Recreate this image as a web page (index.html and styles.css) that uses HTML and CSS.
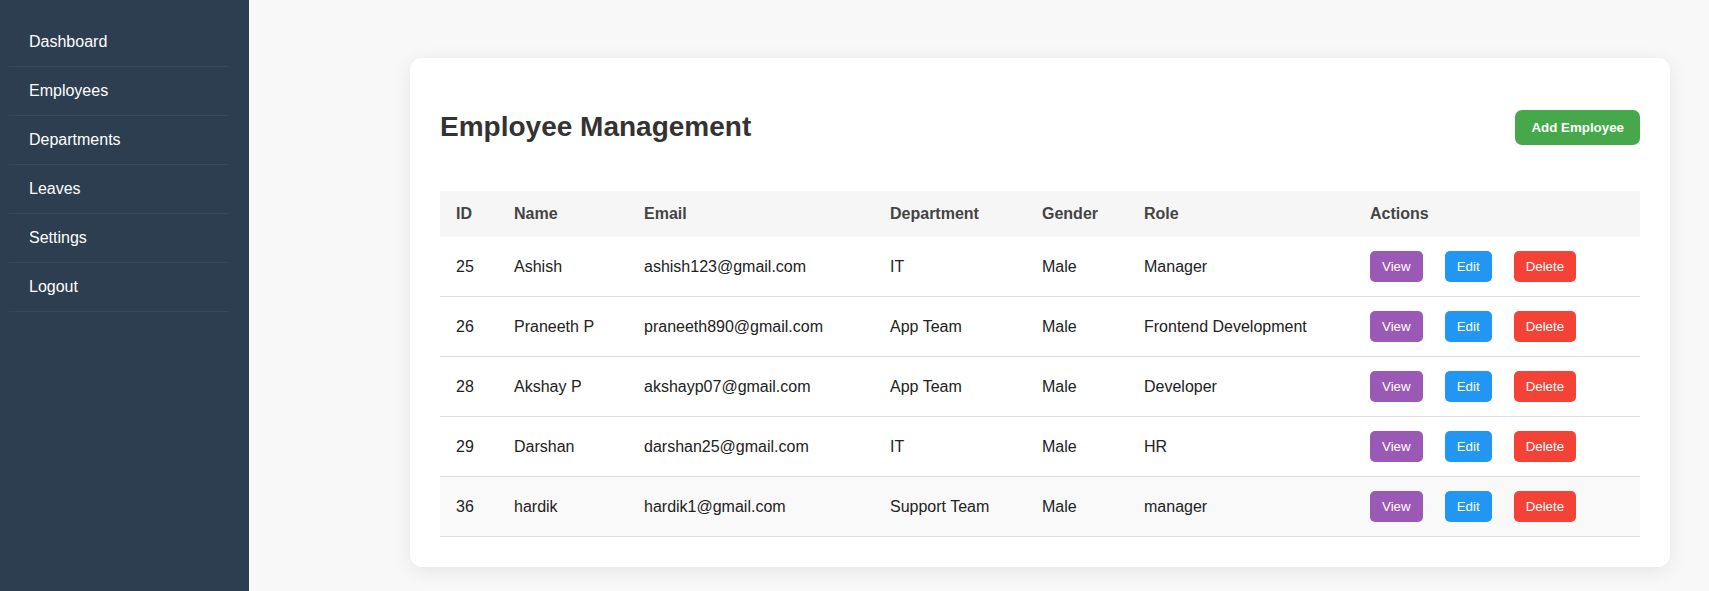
FILE: index.html
```html
<!DOCTYPE html>
<html lang="en">
<head>
<meta charset="utf-8">
<title>Employee Management</title>
<link rel="stylesheet" href="styles.css">
</head>
<body>
<div class="layout">
  <aside class="sidebar">
    <ul class="nav">
      <li class="nav-item">Dashboard</li>
      <li class="nav-item">Employees</li>
      <li class="nav-item">Departments</li>
      <li class="nav-item">Leaves</li>
      <li class="nav-item">Settings</li>
      <li class="nav-item">Logout</li>
    </ul>
  </aside>
  <main class="main">
    <div class="card">
      <div class="card-header">
        <h2 class="title">Employee Management</h2>
        <button class="btn btn-add">Add Employee</button>
      </div>
      <table class="emp-table">
        <thead>
          <tr>
            <th class="col-id">ID</th>
            <th class="col-name">Name</th>
            <th class="col-email">Email</th>
            <th class="col-dept">Department</th>
            <th class="col-gender">Gender</th>
            <th class="col-role">Role</th>
            <th class="col-actions">Actions</th>
          </tr>
        </thead>
        <tbody>
          <tr>
            <td>25</td><td>Ashish</td><td>ashish123@gmail.com</td><td>IT</td><td>Male</td><td>Manager</td>
            <td><div class="actions"><button class="btn btn-view">View</button><button class="btn btn-edit">Edit</button><button class="btn btn-delete">Delete</button></div></td>
          </tr>
          <tr>
            <td>26</td><td>Praneeth P</td><td>praneeth890@gmail.com</td><td>App Team</td><td>Male</td><td>Frontend Development</td>
            <td><div class="actions"><button class="btn btn-view">View</button><button class="btn btn-edit">Edit</button><button class="btn btn-delete">Delete</button></div></td>
          </tr>
          <tr>
            <td>28</td><td>Akshay P</td><td>akshayp07@gmail.com</td><td>App Team</td><td>Male</td><td>Developer</td>
            <td><div class="actions"><button class="btn btn-view">View</button><button class="btn btn-edit">Edit</button><button class="btn btn-delete">Delete</button></div></td>
          </tr>
          <tr>
            <td>29</td><td>Darshan</td><td>darshan25@gmail.com</td><td>IT</td><td>Male</td><td>HR</td>
            <td><div class="actions"><button class="btn btn-view">View</button><button class="btn btn-edit">Edit</button><button class="btn btn-delete">Delete</button></div></td>
          </tr>
          <tr class="row-hover">
            <td>36</td><td>hardik</td><td>hardik1@gmail.com</td><td>Support Team</td><td>Male</td><td>manager</td>
            <td><div class="actions"><button class="btn btn-view">View</button><button class="btn btn-edit">Edit</button><button class="btn btn-delete">Delete</button></div></td>
          </tr>
        </tbody>
      </table>
    </div>
  </main>
</div>
</body>
</html>
```

FILE: styles.css
```css
* { box-sizing: border-box; }

html, body {
  margin: 0;
  padding: 0;
  height: 100%;
}

body {
  font-family: "Liberation Sans", Arial, sans-serif;
  background: #f8f8f8;
  color: #222;
}

.layout {
  display: flex;
  min-height: 100vh;
}

.sidebar {
  width: 249px;
  flex-shrink: 0;
  background: #2c3e50;
  padding: 18px 20px 0 9px;
}

.nav {
  list-style: none;
  margin: 0;
  padding: 0;
}

.nav-item {
  color: #ffffff;
  font-size: 16px;
  line-height: 18px;
  padding: 15px 20px;
  border-bottom: 1px solid #34495e;
}

.main {
  flex: 1;
  padding: 58px 39px 24px 161px;
}

.card {
  background: #ffffff;
  border-radius: 12px;
  box-shadow: 0 4px 20px rgba(0, 0, 0, 0.08);
  padding: 30px;
}

.card-header {
  display: flex;
  align-items: center;
  justify-content: space-between;
  margin-bottom: 25px;
}

.title {
  margin: 23px 0;
  font-size: 28px;
  line-height: 32px;
  font-weight: bold;
  color: #333;
}

.btn {
  font-family: "Liberation Sans", Arial, sans-serif;
  border: none;
  color: #fff;
  font-size: 13.333px;
  line-height: 15px;
  padding: 8px 12px;
  border-radius: 5px;
  cursor: pointer;
}

.btn-add {
  background: #47a84b;
  font-weight: bold;
  padding: 10px 16px;
  border-radius: 7px;
}

.emp-table {
  width: 1200px;
  border-collapse: collapse;
  table-layout: fixed;
}

.emp-table th {
  background: #f6f6f6;
  color: #444;
  font-weight: bold;
  font-size: 16px;
  line-height: 18px;
  text-align: left;
  padding: 14px 16px;
}

.emp-table td {
  font-size: 16px;
  line-height: 18px;
  padding: 14px 16px;
  border-bottom: 1px solid #dedede;
  color: #222;
  white-space: nowrap;
}

.row-hover td { background: #f9f9f9; }

.col-id { width: 58px; }
.col-name { width: 130px; }
.col-email { width: 246px; }
.col-dept { width: 152px; }
.col-gender { width: 102px; }
.col-role { width: 226px; }
.col-actions { width: 286px; }

.actions {
  display: flex;
  gap: 22px;
}

.btn-view { background: #9b59b6; }
.btn-edit { background: #2196f3; }
.btn-delete { background: #f44336; }
```
